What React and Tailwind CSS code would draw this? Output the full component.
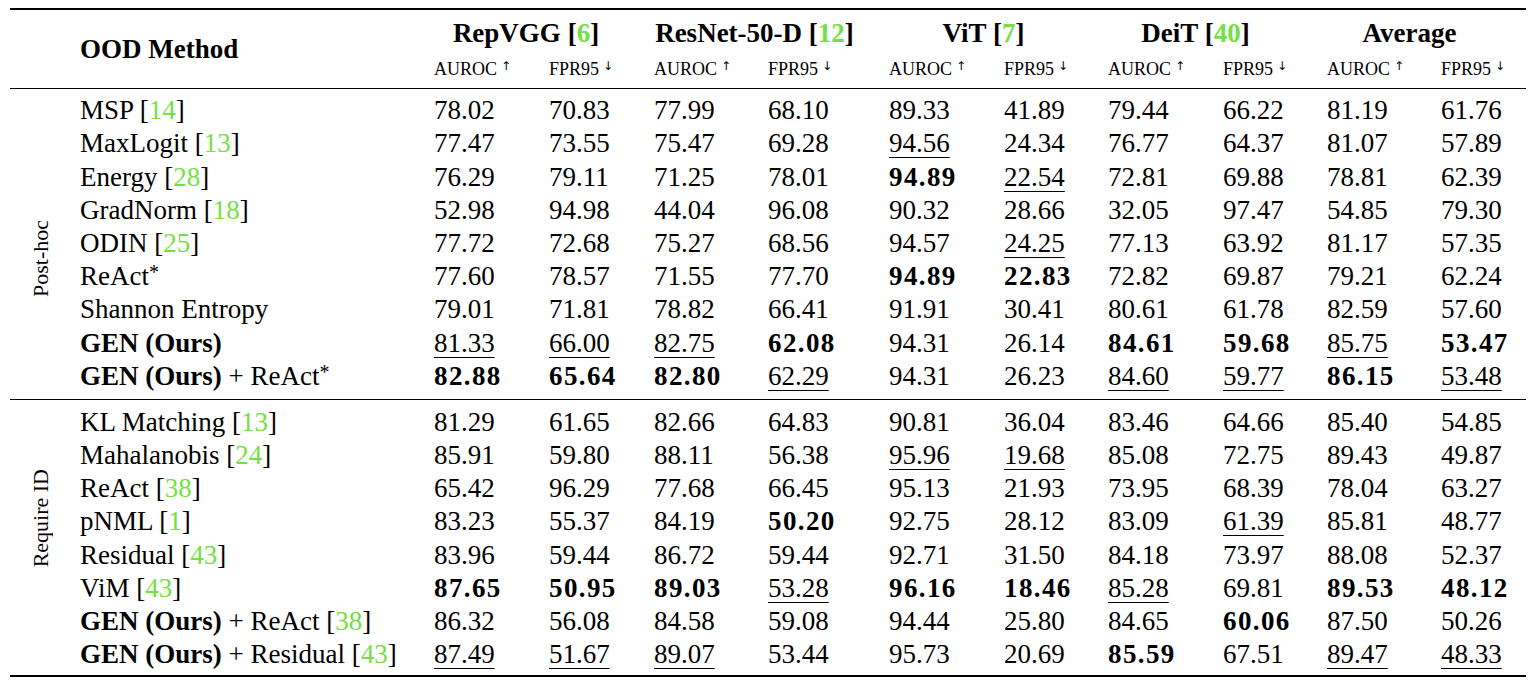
import React from 'react';

// column template shared by header and both sections
const COLS =
  'grid grid-cols-[60px_354px_115px_105px_114px_121px_115px_104px_115px_104px_114px_95px]';

const Cite = ({ n, bold }) => (
  <>
    [<span className={`text-[#74e043] ${bold ? 'font-bold' : ''}`}>{n}</span>]
  </>
);

const Star = () => <span className="relative -top-[6px] text-[20px]">*</span>;

const groups = [
  { name: 'RepVGG', ref: 6, pad: 'pr-[16px]' },
  { name: 'ResNet-50-D', ref: 12, pad: 'pr-[14px]' },
  { name: 'ViT', ref: 7, pad: 'pr-[10px]' },
  { name: 'DeiT', ref: 40, pad: 'pr-[24px]' },
  { name: 'Average', ref: null, pad: 'pr-[24px]' },
];

const postHoc = [
  [<>MSP <Cite n={14} /></>, '78.02 70.83 77.99 68.10 89.33 41.89 79.44 66.22 81.19 61.76'],
  [<>MaxLogit <Cite n={13} /></>, '77.47 73.55 75.47 69.28 _94.56 24.34 76.77 64.37 81.07 57.89'],
  [<>Energy <Cite n={28} /></>, '76.29 79.11 71.25 78.01 *94.89 _22.54 72.81 69.88 78.81 62.39'],
  [<>GradNorm <Cite n={18} /></>, '52.98 94.98 44.04 96.08 90.32 28.66 32.05 97.47 54.85 79.30'],
  [<>ODIN <Cite n={25} /></>, '77.72 72.68 75.27 68.56 94.57 _24.25 77.13 63.92 81.17 57.35'],
  [<>ReAct<Star /></>, '77.60 78.57 71.55 77.70 *94.89 *22.83 72.82 69.87 79.21 62.24'],
  [<>Shannon Entropy</>, '79.01 71.81 78.82 66.41 91.91 30.41 80.61 61.78 82.59 57.60'],
  [<b>GEN (Ours)</b>, '_81.33 _66.00 _82.75 *62.08 94.31 26.14 *84.61 *59.68 _85.75 *53.47'],
  [<><b>GEN (Ours)</b> + ReAct<Star /></>, '*82.88 *65.64 *82.80 _62.29 94.31 26.23 _84.60 _59.77 *86.15 _53.48'],
];

const requireId = [
  [<>KL Matching <Cite n={13} /></>, '81.29 61.65 82.66 64.83 90.81 36.04 83.46 64.66 85.40 54.85'],
  [<>Mahalanobis <Cite n={24} /></>, '85.91 59.80 88.11 56.38 _95.96 _19.68 85.08 72.75 89.43 49.87'],
  [<>ReAct <Cite n={38} /></>, '65.42 96.29 77.68 66.45 95.13 21.93 73.95 68.39 78.04 63.27'],
  [<>pNML <Cite n={1} /></>, '83.23 55.37 84.19 *50.20 92.75 28.12 83.09 _61.39 85.81 48.77'],
  [<>Residual <Cite n={43} /></>, '83.96 59.44 86.72 59.44 92.71 31.50 84.18 73.97 88.08 52.37'],
  [<>ViM <Cite n={43} /></>, '*87.65 *50.95 *89.03 _53.28 *96.16 *18.46 _85.28 69.81 *89.53 *48.12'],
  [<><b>GEN (Ours)</b> + ReAct <Cite n={38} /></>, '86.32 56.08 84.58 59.08 94.44 25.80 84.65 *60.06 87.50 50.26'],
  [<><b>GEN (Ours)</b> + Residual <Cite n={43} /></>, '_87.49 _51.67 _89.07 53.44 95.73 20.69 *85.59 67.51 _89.47 _48.33'],
];

const Num = ({ v }) => {
  if (v[0] === '*') return <span className="font-bold tracking-[1.4px]">{v.slice(1)}</span>;
  if (v[0] === '_')
    return (
      <span className="underline decoration-1 underline-offset-[5px]">{v.slice(1)}</span>
    );
  return <span>{v}</span>;
};

const Section = ({ label, rows, span, labelPad }) => (
  <div className={`${COLS} auto-rows-[33.2px]`}>
    <div className={`${span} flex items-center justify-center ${labelPad}`}>
      <span className="[writing-mode:vertical-rl] rotate-180 text-[22px] whitespace-nowrap">
        {label}
      </span>
    </div>
    {rows.map(([name, nums], i) => (
      <React.Fragment key={i}>
        <div className="flex items-center pl-[10px] whitespace-nowrap">
          <span>{name}</span>
        </div>
        {nums.split(' ').map((v, j) => (
          <div key={j} className="flex items-center pl-[10px] whitespace-nowrap">
            <Num v={v} />
          </div>
        ))}
      </React.Fragment>
    ))}
  </div>
);

const Arrow = ({ c }) => (
  <span className="relative -top-[5px] ml-[4px] font-['DejaVu_Sans',sans-serif] text-[12px] leading-none">
    {c}
  </span>
);

export default function App() {
  return (
    <div className="min-h-screen bg-white text-black font-['Liberation_Serif',serif] text-[27px] pt-[8px]">
      <div className="ml-[10px] w-[1516px]">
        <div className="h-[2px] bg-black" />

        {/* header */}
        <div className={`${COLS} grid-rows-[46px_26px] pb-[6px]`}>
          <div className="row-span-2" />
          <div className="row-span-2 flex items-center pl-[10px] pt-[6px] font-bold">
            OOD Method
          </div>
          {groups.map((g) => (
            <div
              key={g.name}
              className={`col-span-2 flex items-center justify-center font-bold whitespace-nowrap ${g.pad}`}
            >
              <span>
                {g.name}
                {g.ref !== null && (
                  <>
                    {' '}
                    <Cite n={g.ref} bold />
                  </>
                )}
              </span>
            </div>
          ))}
          {groups.map((g) => (
            <React.Fragment key={g.name}>
              <div className="flex items-center pl-[10px] text-[18px] whitespace-nowrap">
                <span>
                  AUROC<Arrow c="↑" />
                </span>
              </div>
              <div className="flex items-center pl-[10px] text-[18px] whitespace-nowrap">
                <span>
                  FPR95<Arrow c="↓" />
                </span>
              </div>
            </React.Fragment>
          ))}
        </div>
        <div className="h-[1.4px] bg-black" />

        <div className="pt-[4.5px] pb-[6px]">
          <Section label="Post-hoc" rows={postHoc} span="row-span-9" labelPad="pt-[30px]" />
        </div>
        <div className="h-[1.4px] bg-black" />

        <div className="pt-[5.5px] pb-[4px]">
          <Section label="Require ID" rows={requireId} span="row-span-8" labelPad="pb-[40px]" />
        </div>
        <div className="h-[2px] bg-black" />
      </div>
    </div>
  );
}
